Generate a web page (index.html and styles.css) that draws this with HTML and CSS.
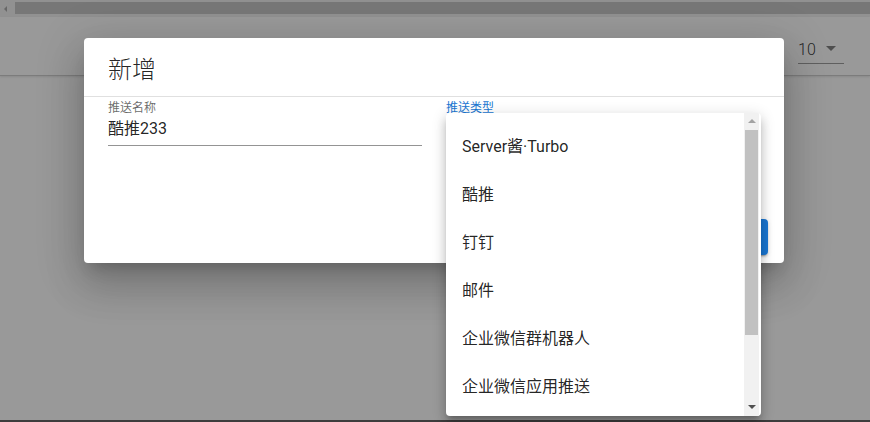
FILE: index.html
```html
<!DOCTYPE html>
<html lang="zh">
<head>
<meta charset="utf-8">
<link rel="stylesheet" href="styles.css">
</head>
<body>
<div class="page">
  <div class="hscroll">
    <div class="hscroll-arrow"></div>
    <div class="hscroll-thumb"></div>
  </div>
  <div class="toolbar">
    <div class="select">
      <span class="select-value">10</span>
      <span class="select-caret"></span>
    </div>
  </div>
  <div class="page-rest"></div>
  <div class="page-bottom"></div>
</div>

<div class="overlay">
  <div class="dialog">
    <div class="dialog-title">新增</div>
    <div class="dialog-body">
      <div class="field">
        <div class="field-label">推送名称</div>
        <div class="field-input">酷推233</div>
      </div>
      <div class="field">
        <div class="field-label active">推送类型</div>
        <div class="field-input"></div>
      </div>
    </div>
    <div class="dialog-actions">
      <button class="btn-primary">保存</button>
    </div>
  </div>
</div>

<div class="menu">
  <ul class="menu-list">
    <li class="menu-item">Server酱·Turbo</li>
    <li class="menu-item">酷推</li>
    <li class="menu-item">钉钉</li>
    <li class="menu-item">邮件</li>
    <li class="menu-item">企业微信群机器人</li>
    <li class="menu-item">企业微信应用推送</li>
  </ul>
  <div class="vscroll">
    <div class="vscroll-up"></div>
    <div class="vscroll-thumb"></div>
    <div class="vscroll-down"></div>
  </div>
</div>
</body>
</html>
```

FILE: styles.css
```css
* { box-sizing: border-box; }
html, body {
  margin: 0;
  padding: 0;
  width: 870px;
  height: 422px;
  overflow: hidden;
  background: #fff;
  font-family: Roboto, "Noto Sans CJK SC", sans-serif;
}

.page {
  width: 870px;
  height: 422px;
  display: flex;
  flex-direction: column;
}

.hscroll {
  height: 17px;
  background: #f1f1f1;
  display: flex;
  align-items: flex-start;
  padding-top: 2px;
}
.hscroll-arrow {
  width: 0;
  height: 0;
  margin: 4px 8px 0 4px;
  border-top: 3px solid transparent;
  border-bottom: 3px solid transparent;
  border-right: 3px solid #a3a3a3;
}
.hscroll-thumb {
  flex: 1;
  height: 12px;
  background: #c1c1c1;
}

.toolbar {
  height: 59px;
  display: flex;
  justify-content: flex-end;
  align-items: flex-start;
  padding: 20px 26px 0 0;
  border-bottom: 1px solid #c9c9c9;
  box-shadow: 0 1px 2px rgba(0,0,0,0.12);
}
.select {
  width: 46px;
  height: 27px;
  display: flex;
  align-items: center;
  justify-content: space-between;
  border-bottom: 1px solid rgba(0,0,0,0.42);
  padding-right: 8px;
}
.select-value {
  font-size: 16px;
  font-weight: 300;
  color: rgba(0,0,0,0.87);
  line-height: 20px;
}
.select-caret {
  width: 0;
  height: 0;
  border-left: 5px solid transparent;
  border-right: 5px solid transparent;
  border-top: 5px solid rgba(0,0,0,0.54);
  margin-bottom: 3px;
}
.page-rest { flex: 1; }
.page-bottom {
  height: 2px;
  background: #555;
}

.overlay {
  position: absolute;
  inset: 0;
  background: rgba(33,33,33,0.46);
  padding: 38px 0 0 84px;
}

.dialog {
  width: 700px;
  background: #fff;
  border-radius: 4px;
  box-shadow: 0 11px 15px -7px rgba(0,0,0,.2), 0 24px 38px 3px rgba(0,0,0,.14), 0 9px 46px 8px rgba(0,0,0,.12);
  overflow: hidden;
}
.dialog-title {
  padding: 16px 24px 10px;
  font-size: 24px;
  line-height: 32px;
  font-weight: 300;
  color: rgba(0,0,0,0.87);
  border-bottom: 1px solid #e0e0e0;
}
.dialog-body {
  display: grid;
  grid-template-columns: 1fr 1fr;
  column-gap: 24px;
  padding: 0 24px 65px;
}
.field-label {
  margin-top: 3px;
  font-size: 12px;
  line-height: 16px;
  color: rgba(0,0,0,0.6);
}
.field-label.active { color: #1976d2; }
.field-input {
  margin-top: 1px;
  height: 29px;
  padding-bottom: 4px;
  font-size: 16px;
  line-height: 24px;
  color: rgba(0,0,0,0.87);
  border-bottom: 1px solid rgba(0,0,0,0.42);
}
.dialog-actions {
  display: flex;
  justify-content: flex-end;
  padding: 8px 16px 8px;
}
.btn-primary {
  width: 64px;
  height: 36px;
  border: 0;
  border-radius: 4px;
  background: #1976d2;
  color: #fff;
  font-family: Roboto, "Noto Sans CJK SC", sans-serif;
  font-size: 14px;
  box-shadow: 0 3px 1px -2px rgba(0,0,0,.2), 0 2px 2px 0 rgba(0,0,0,.14), 0 1px 5px 0 rgba(0,0,0,.12);
}

.menu {
  position: absolute;
  left: 446px;
  top: 113px;
  width: 315px;
  height: 303px;
  background: #fff;
  border-radius: 4px;
  box-shadow: 0 5px 5px -3px rgba(0,0,0,.2), 0 8px 10px 1px rgba(0,0,0,.14), 0 3px 14px 2px rgba(0,0,0,.12);
  display: flex;
  overflow: hidden;
}
.menu-list {
  flex: 1;
  list-style: none;
  margin: 0;
  padding: 8px 0 0;
  overflow: hidden;
}
.menu-item {
  height: 48px;
  display: flex;
  align-items: center;
  padding-left: 16px;
  font-size: 16px;
  color: rgba(0,0,0,0.87);
}
.vscroll {
  width: 15px;
  margin-right: 2px;
  background: #f1f1f1;
  display: flex;
  flex-direction: column;
  align-items: center;
}
.vscroll-up {
  margin-top: 6px;
  width: 0;
  height: 0;
  border-left: 4px solid transparent;
  border-right: 4px solid transparent;
  border-bottom: 4px solid #a3a3a3;
}
.vscroll-thumb {
  margin-top: 7px;
  width: 13px;
  height: 205px;
  background: #c1c1c1;
}
.vscroll-down {
  margin-top: auto;
  margin-bottom: 7px;
  width: 0;
  height: 0;
  border-left: 4px solid transparent;
  border-right: 4px solid transparent;
  border-top: 4px solid #505050;
}
```
